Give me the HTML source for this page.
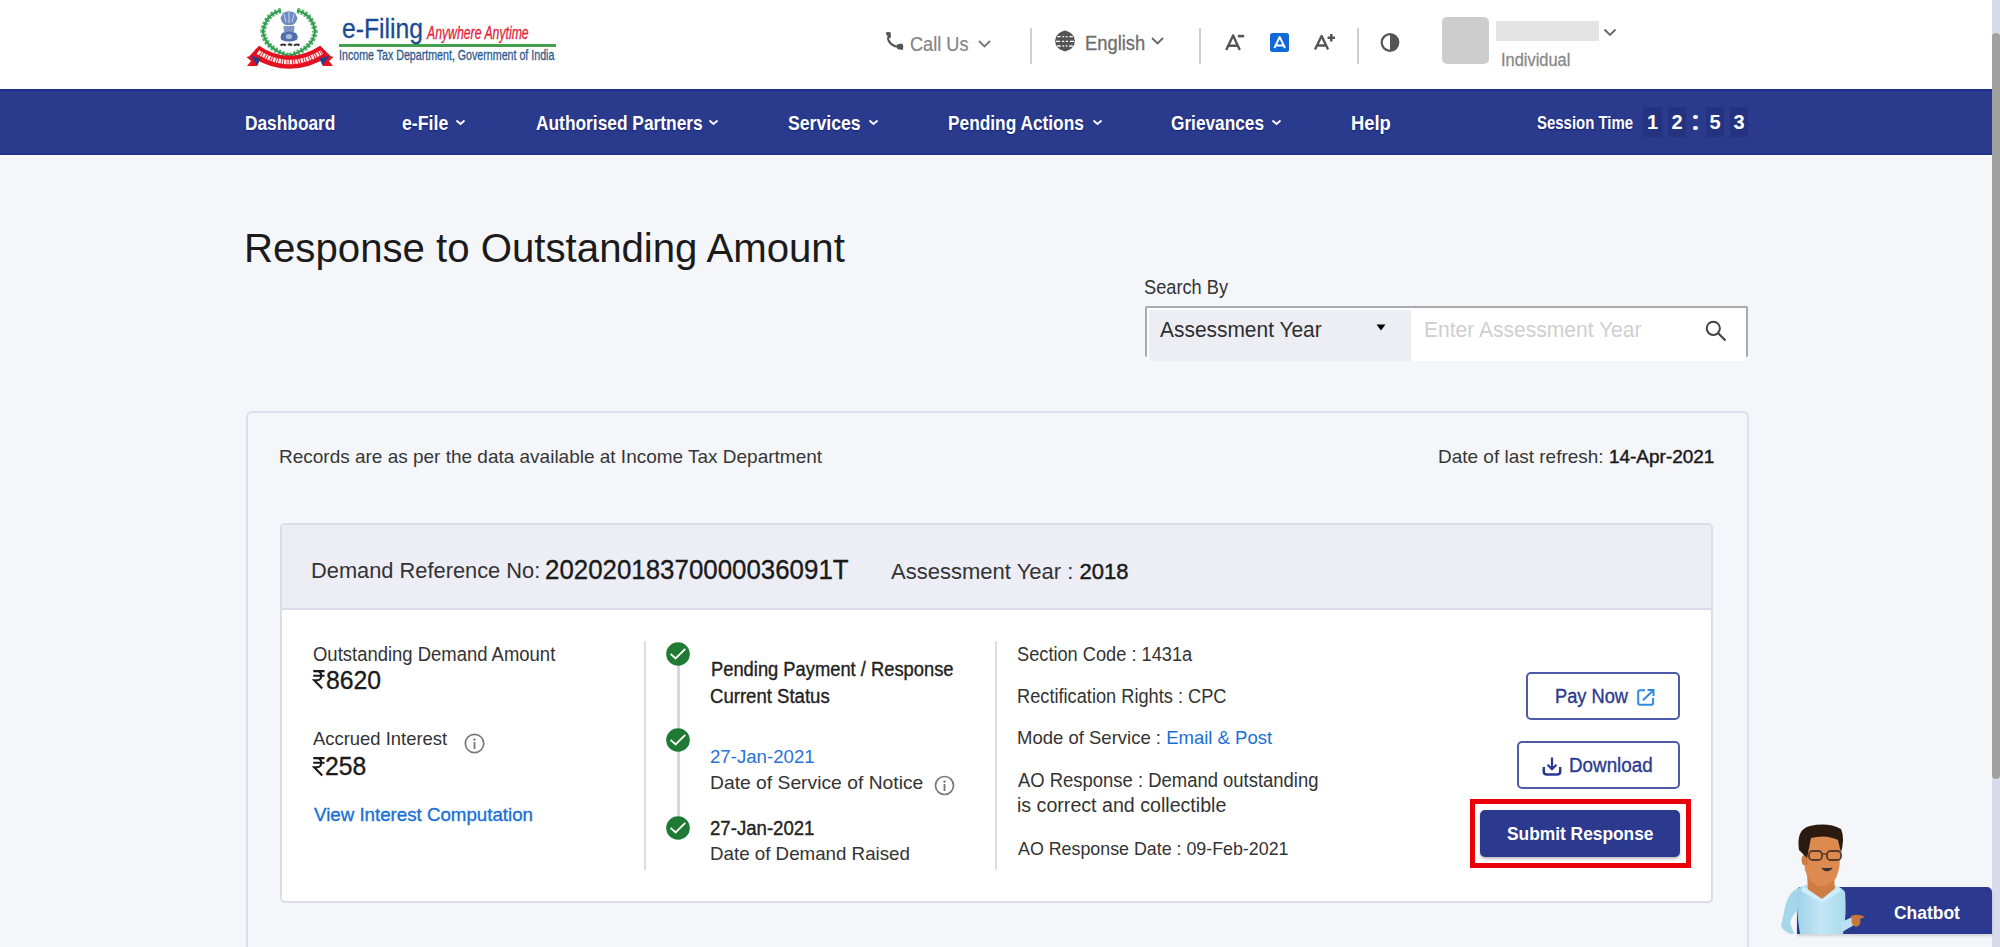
<!DOCTYPE html>
<html><head><meta charset="utf-8">
<title>Response to Outstanding Amount</title>
<style>
*{box-sizing:border-box;margin:0;padding:0}
html,body{width:2000px;height:947px;overflow:hidden;background:#f5f6fa;font-family:"Liberation Sans",sans-serif;position:relative}
.t{position:absolute;white-space:nowrap;transform-origin:0 0}
.b{position:absolute}
svg{position:absolute;overflow:visible}
</style></head>
<body>
<!-- header -->
<div class="b" style="left:0;top:0;width:1992px;height:89px;background:#fff"></div>
<div class="b" style="left:0;top:89px;width:1992px;height:66px;border-top:2px solid #1f2e86;border-bottom:2px solid #23318a;background:#2a3a8c"></div>
<div class="b" style="left:0;top:155px;width:1992px;height:2px;background:#fbfbfd"></div>
<!-- scrollbar -->
<div class="b" style="left:1992px;top:0;width:8px;height:947px;background:#d7dae8"></div>
<div class="b" style="left:1992px;top:33px;width:8px;height:746px;background:#a0a0a0;border-radius:4px"></div>

<!-- logo emblem -->
<svg style="left:240px;top:0" width="100" height="80" viewBox="240 0 100 80">
  <path d="M281 10.5 Q266 14 263 31 Q264 48 289 56 Q314 48 315 31 Q312 14 297 10.5" fill="none" stroke="#5fb474" stroke-width="5.5" stroke-dasharray="2.6 1.4"/>
  <path d="M281 10.5 Q266 14 263 31 Q264 48 289 56 Q314 48 315 31 Q312 14 297 10.5" fill="none" stroke="#2e9a4c" stroke-width="2"/>
  <path d="M283 13 Q289 9.5 295 13 L297.5 18 Q296 24 292 25 L286 25 Q282 24 280.5 18 Z" fill="#6f8cc0"/>
  <path d="M284 14 L286 22 M289 12 V23 M294 14 L292 22" stroke="#c9d5ea" stroke-width="1"/>
  <path d="M283.5 26 H294.5 L294 32 H284 Z" fill="#7e97c6"/>
  <path d="M282 33 Q289 30 296 33 Q299 37 296.5 40 Q289 43 281.5 40 Q279.5 37 282 33 Z" fill="#4f6eaa"/>
  <ellipse cx="289" cy="36.5" rx="3.2" ry="2.6" fill="#a9bbdc"/>
  <path d="M280.5 45.5 Q283 43.5 286 45.5 M288 45 Q290 43.5 292 45.5 M294 45.5 Q297 43.5 299.5 45.5" fill="none" stroke="#333" stroke-width="2"/>
  <path d="M259 45.7 Q289 65.7 320.2 45.7 L330.2 55.7 Q289 81.7 249.7 55.7 Z" fill="#e40f1f"/>
  <path d="M250 56 L260.5 57 L257 66 L247 66 L251 61 L246.5 57 Z" fill="#e40f1f"/>
  <path d="M330 56 L319.5 57 L323 66 L333 66 L329 61 L333.5 57 Z" fill="#e40f1f"/>
  <path d="M250.5 55.7 L260.5 58.5 L257.5 65.5 Z" fill="#23418f"/>
  <path d="M329.5 55.7 L319.5 58.5 L322.5 65.5 Z" fill="#23418f"/>
  <path d="M258 52 Q289 72 322 52" fill="none" stroke="#fff" stroke-width="4.5" stroke-dasharray="2.5 0.8 1.5 0.8" opacity="0.9"/>
</svg>
<div class="b" style="left:339px;top:44px;width:217px;height:3px;background:#43a04f"></div>

<!-- call us -->
<svg style="left:884px;top:31px" width="20" height="20" viewBox="0 0 20 20"><path fill="#555" d="M1.6 1.4 Q4 0.6 6.6 1.3 L7 6.3 Q5.6 7.4 4.3 7.6 Z M12.9 13.6 L17.6 12.6 Q19.2 13.4 19.3 15 L19 18.7 Q15.5 19.3 13 17.6 Z"/><path d="M3.6 6.5 Q5 14.3 14.2 16" fill="none" stroke="#555" stroke-width="2"/></svg>
<svg style="left:978px;top:40px" width="13" height="8" viewBox="0 0 13 8"><path d="M1 1 L6.5 6.5 L12 1" fill="none" stroke="#777" stroke-width="1.8"/></svg>
<div class="b" style="left:1030px;top:28px;width:2px;height:36px;background:#cfcfcf"></div>
<!-- globe -->
<svg style="left:1055px;top:31px" width="20" height="20" viewBox="0 0 20 20">
  <circle cx="10" cy="10" r="9.9" fill="#555"/>
  <path d="M2.2 5.6 H17.8 M1 10.3 H19 M2.2 15 H17.8" stroke="#fff" stroke-width="1.3"/>
  <ellipse cx="10" cy="10" rx="4" ry="9.5" fill="none" stroke="#555" stroke-width="1.8"/>
  <path d="M10 0.5 V19.5" stroke="#555" stroke-width="1.6"/>
</svg>
<svg style="left:1151px;top:37px" width="13" height="8" viewBox="0 0 13 8"><path d="M1 1 L6.5 6.5 L12 1" fill="none" stroke="#666" stroke-width="1.8"/></svg>
<div class="b" style="left:1199px;top:28px;width:2px;height:36px;background:#cfcfcf"></div>
<!-- A- A A+ -->
<svg style="left:1224px;top:33px" width="24" height="20" viewBox="0 0 24 20"><path d="M2.2 17 L9.1 2.4 L15.8 17 M4.3 12.8 H13.9" fill="none" stroke="#555" stroke-width="2.4" stroke-linejoin="round"/><path d="M13.8 3.1 H20.2" stroke="#555" stroke-width="2.6"/></svg>
<div class="b" style="left:1270px;top:33px;width:19px;height:18.5px;background:#0f69d6;border-radius:2.5px"></div>
<svg style="left:1272px;top:35px" width="15" height="15" viewBox="0 0 15 15"><path d="M2.4 13 L7.7 2 L13 13 M4 10.5 H11.4" fill="none" stroke="#fff" stroke-width="1.9" stroke-linejoin="round"/></svg>
<svg style="left:1313px;top:33px" width="24" height="20" viewBox="0 0 24 20"><path d="M2 16.6 L8.6 3 L15.1 16.6 M4 12.5 H13.1" fill="none" stroke="#555" stroke-width="2.4" stroke-linejoin="round"/><path d="M14.6 4.7 H21.9 M18.25 1 V8.4" stroke="#555" stroke-width="2.5"/></svg>
<div class="b" style="left:1357px;top:28px;width:2px;height:36px;background:#cfcfcf"></div>
<!-- contrast -->
<svg style="left:1380px;top:33px" width="20" height="19" viewBox="0 0 20 19"><circle cx="10" cy="9.5" r="8.3" fill="none" stroke="#555" stroke-width="2.2"/><path d="M10 1.2 A8.3 8.3 0 0 1 10 17.8 Z" fill="#555"/></svg>
<!-- avatar -->
<div class="b" style="left:1442px;top:17px;width:47px;height:47px;background:#cdcdcd;border-radius:5px"></div>
<div class="b" style="left:1496px;top:21px;width:103px;height:20px;background:#e4e4e4"></div>
<svg style="left:1603px;top:28px" width="14" height="9" viewBox="0 0 14 9"><path d="M1.5 1.5 L7 7 L12.5 1.5" fill="none" stroke="#666" stroke-width="1.8"/></svg>

<!-- nav chevrons -->
<svg style="left:455px;top:119px" width="11" height="7" viewBox="0 0 11 7"><path d="M1.5 1.5 L5.5 5 L9.5 1.5" fill="none" stroke="#fff" stroke-width="1.8"/></svg>
<svg style="left:708px;top:119px" width="11" height="7" viewBox="0 0 11 7"><path d="M1.5 1.5 L5.5 5 L9.5 1.5" fill="none" stroke="#fff" stroke-width="1.8"/></svg>
<svg style="left:868px;top:119px" width="11" height="7" viewBox="0 0 11 7"><path d="M1.5 1.5 L5.5 5 L9.5 1.5" fill="none" stroke="#fff" stroke-width="1.8"/></svg>
<svg style="left:1092px;top:119px" width="11" height="7" viewBox="0 0 11 7"><path d="M1.5 1.5 L5.5 5 L9.5 1.5" fill="none" stroke="#fff" stroke-width="1.8"/></svg>
<svg style="left:1271px;top:119px" width="11" height="7" viewBox="0 0 11 7"><path d="M1.5 1.5 L5.5 5 L9.5 1.5" fill="none" stroke="#fff" stroke-width="1.8"/></svg>

<!-- session boxes -->
<div class="b" style="left:1643px;top:107px;width:19px;height:30px;background:#25327f"></div>
<div class="b" style="left:1668px;top:107px;width:18px;height:30px;background:#25327f"></div>
<div class="b" style="left:1706px;top:107px;width:18px;height:30px;background:#25327f"></div>
<div class="b" style="left:1730px;top:107px;width:18px;height:30px;background:#25327f"></div>
<div class="b" style="left:1693px;top:115px;width:5px;height:4px;background:#fff;border-radius:2px"></div>
<div class="b" style="left:1693px;top:126px;width:5px;height:4px;background:#fff;border-radius:2px"></div>
<div class="t" style="left:1643px;top:111px;width:19px;text-align:center;font-weight:bold;font-size:20px;line-height:22px;color:#fff">1</div>
<div class="t" style="left:1668px;top:111px;width:18px;text-align:center;font-weight:bold;font-size:20px;line-height:22px;color:#fff">2</div>
<div class="t" style="left:1706px;top:111px;width:18px;text-align:center;font-weight:bold;font-size:20px;line-height:22px;color:#fff">5</div>
<div class="t" style="left:1730px;top:111px;width:18px;text-align:center;font-weight:bold;font-size:20px;line-height:22px;color:#fff">3</div>

<!-- search box -->
<div class="b" style="left:1147px;top:308px;width:599px;height:53px;background:#fff"></div>
<div class="b" style="left:1145px;top:306px;width:603px;height:2px;background:#a9aaae;border-radius:2px 2px 0 0"></div>
<div class="b" style="left:1145px;top:306px;width:2px;height:51px;background:#a9aaae;border-radius:2px 0 0 2px"></div>
<div class="b" style="left:1746px;top:306px;width:2px;height:51px;background:#a9aaae;border-radius:0 2px 2px 0"></div>
<div class="b" style="left:1148.5px;top:309.5px;width:262px;height:51.5px;background:#ededf4"></div>
<svg style="left:1376px;top:324px" width="10" height="7" viewBox="0 0 10 7"><path d="M0.5 0.5 H9.5 L5 6.5 Z" fill="#000"/></svg>
<svg style="left:1703px;top:318px" width="26" height="26" viewBox="0 0 26 26"><circle cx="10.3" cy="10.3" r="6.6" fill="none" stroke="#444" stroke-width="2"/><path d="M15 15 L22.5 22.5" stroke="#444" stroke-width="2.2"/></svg>

<!-- outer card -->
<div class="b" style="left:246px;top:411px;width:1503px;height:600px;border:2px solid #dcdeec;border-radius:6px;background:#f5f6fa"></div>
<!-- inner card -->
<div class="b" style="left:280px;top:523px;width:1433px;height:380px;border:2px solid #dadcea;border-radius:5px;background:#fff;overflow:hidden">
  <div class="b" style="left:0;top:0;width:1431px;height:85px;background:#ecedf5;border-bottom:2px solid #dadcea"></div>
</div>
<!-- column separators -->
<div class="b" style="left:644px;top:641px;width:2px;height:229px;background:#dcdcec"></div>
<div class="b" style="left:995px;top:641px;width:2px;height:229px;background:#dcdcec"></div>
<!-- timeline -->
<div class="b" style="left:676.5px;top:660px;width:3px;height:160px;background:#d6d5ea"></div>
<svg style="left:666px;top:641.5px" width="24" height="24" viewBox="0 0 24 24"><circle cx="12" cy="12" r="11.8" fill="#1f7a33"/><path d="M4.6 11.9 L9.6 16.5 L19.3 6.8" fill="none" stroke="#fff" stroke-width="1.9"/></svg>
<svg style="left:666px;top:727.5px" width="24" height="24" viewBox="0 0 24 24"><circle cx="12" cy="12" r="11.8" fill="#1f7a33"/><path d="M4.6 11.9 L9.6 16.5 L19.3 6.8" fill="none" stroke="#fff" stroke-width="1.9"/></svg>
<svg style="left:666px;top:815.5px" width="24" height="24" viewBox="0 0 24 24"><circle cx="12" cy="12" r="11.8" fill="#1f7a33"/><path d="M4.6 11.9 L9.6 16.5 L19.3 6.8" fill="none" stroke="#fff" stroke-width="1.9"/></svg>
<!-- info icons -->
<svg style="left:464px;top:732.5px" width="21" height="21" viewBox="0 0 21 21"><circle cx="10.5" cy="10.5" r="9.2" fill="none" stroke="#777" stroke-width="1.7"/><circle cx="10.5" cy="6.6" r="1.2" fill="#777"/><rect x="9.6" y="9" width="1.8" height="7" fill="#777"/></svg>
<svg style="left:934px;top:774.5px" width="21" height="21" viewBox="0 0 21 21"><circle cx="10.5" cy="10.5" r="9" fill="none" stroke="#777" stroke-width="1.7"/><circle cx="10.5" cy="6.6" r="1.2" fill="#777"/><rect x="9.6" y="9" width="1.8" height="7" fill="#777"/></svg>
<!-- rupee values -->
<svg style="left:312.5px;top:670px" width="12" height="19" viewBox="0 0 12 19"><path d="M0.3 1.1 H11.5 M0.3 5.8 H11.5 M0.8 1.1 H4.2 C9.6 1.1 9.6 10.2 4.2 10.2 H1.2 L9.2 18.4" fill="none" stroke="#1a1a1a" stroke-width="2.1"/></svg>
<svg style="left:312.5px;top:756.5px" width="12" height="19" viewBox="0 0 12 19"><path d="M0.3 1.1 H11.5 M0.3 5.8 H11.5 M0.8 1.1 H4.2 C9.6 1.1 9.6 10.2 4.2 10.2 H1.2 L9.2 18.4" fill="none" stroke="#1a1a1a" stroke-width="2.1"/></svg>

<!-- buttons -->
<div class="b" style="left:1526px;top:672px;width:154px;height:48px;border:2px solid #4d5baa;border-radius:5px;background:#fff"></div>
<svg style="left:1636px;top:687.5px" width="20" height="19" viewBox="0 0 20 19"><path d="M9 2.2 H4 Q2.2 2.2 2.2 4 V15 Q2.2 16.8 4 16.8 H15.3 Q17.1 16.8 17.1 15 V10" fill="none" stroke="#2f8ae2" stroke-width="2"/><path d="M11.5 2 H17.5 V8 M17.3 2.2 L7 12.3" fill="none" stroke="#2f8ae2" stroke-width="2"/></svg>
<div class="b" style="left:1517px;top:741px;width:163px;height:48px;border:2px solid #4d5baa;border-radius:5px;background:#fff"></div>
<svg style="left:1541px;top:756px" width="22" height="21" viewBox="0 0 22 21"><path d="M11 1.5 V13 M6.6 8.8 L11 13.2 L15.4 8.8" fill="none" stroke="#2b3a8e" stroke-width="2.2"/><path d="M2.8 11 V15.5 Q2.8 18.6 6 18.6 H16 Q19.2 18.6 19.2 15.5 V11" fill="none" stroke="#2b3a8e" stroke-width="2.5"/></svg>
<div class="b" style="left:1480px;top:810px;width:200px;height:47px;background:#2b3a8e;border-radius:5px;box-shadow:0 2px 3px rgba(0,0,0,.25)"></div>
<div class="b" style="left:1470px;top:799px;width:221px;height:69px;border:5px solid #ea0008"></div>

<!-- chatbot -->
<div class="b" style="left:1797px;top:887px;width:195px;height:47px;background:#2b3a8e;border-radius:4px 5px 0 0;box-shadow:0 2px 3px rgba(0,0,0,.15)"></div>
<svg style="left:1775px;top:820px" width="100" height="120" viewBox="1775 820 100 120">
  <defs><linearGradient id="sh" x1="0" y1="0" x2="1" y2="0"><stop offset="0" stop-color="#9fd2e8"/><stop offset="0.5" stop-color="#c3e6f4"/><stop offset="1" stop-color="#a9d9ec"/></linearGradient></defs>
  <!-- left arm -->
  <path d="M1799 888 Q1789 891 1785 907 L1781 926 Q1784 932 1791 934 L1794 934 L1790 922 Q1794 912 1801 906 Z" fill="#a6d6ea"/>
  <!-- torso -->
  <path d="M1797 889 Q1806 883 1822 884 Q1840 884 1845 892 Q1847 915 1843 934 L1800 934 Q1796 910 1797 889 Z" fill="url(#sh)"/>
  <!-- right arm -->
  <path d="M1840 923 L1852 917 L1856 924 L1842 932 Z" fill="#b9e1f1"/>
  <path d="M1851 916 Q1858 913 1865 917 L1860 919 Q1862 925 1856 927 L1852 924 Z" fill="#c77837"/>
  <!-- neck -->
  <path d="M1807 874 L1834 874 L1835 891 L1822 899 L1808 891 Z" fill="#cf7c42"/>
  <path d="M1803 886 L1822 899 L1838 886 L1841 891 L1822 903 L1801 891 Z" fill="#cdeefb"/>
  <!-- head -->
  <path d="M1803 846 Q1802 828 1820 829 Q1840 830 1840 848 Q1841 868 1836 878 Q1828 888 1819 886 Q1808 882 1805 870 Z" fill="#dc8a50"/>
  <ellipse cx="1805" cy="860" rx="3.5" ry="5.5" fill="#cf7c42"/>
  <path d="M1799 850 Q1796 829 1810 826 Q1828 822 1841 829 Q1845 838 1841 853 L1838 840 Q1826 834 1811 838 L1807 858 Z" fill="#2a1a10"/>
  <rect x="1809" y="851" width="13" height="9" rx="3.5" fill="none" stroke="#5a3a2a" stroke-width="1.8"/>
  <rect x="1827" y="851" width="14" height="9" rx="3.5" fill="none" stroke="#5a3a2a" stroke-width="1.8"/>
  <path d="M1822 854 L1827 854" stroke="#5a3a2a" stroke-width="1.5"/>
  <path d="M1822 868 Q1827 873 1832 868" fill="#333" stroke="#333" stroke-width="1.5"/>
</svg>

<div class="t" style="left:341.6px;top:15.0px;font-size:27.5px;line-height:27.5px;color:#1c4a92;transform:scaleX(0.898);-webkit-text-stroke:0.3px currentColor;">e-Filing</div>
<div class="t" style="left:427.0px;top:24.5px;font-size:17.5px;line-height:17.5px;color:#e3223a;font-style:italic;transform:scaleX(0.700);-webkit-text-stroke:0.3px currentColor;">Anywhere Anytime</div>
<div class="t" style="left:339.2px;top:48.4px;font-size:14.0px;line-height:14.0px;color:#2d5a8e;transform:scaleX(0.761);-webkit-text-stroke:0.3px currentColor;">Income Tax Department, Government of India</div>
<div class="t" style="left:910.4px;top:35.2px;font-size:19.5px;line-height:19.5px;color:#858585;transform:scaleX(0.930);-webkit-text-stroke:0.2px currentColor;">Call Us</div>
<div class="t" style="left:1085.1px;top:33.6px;font-size:19.5px;line-height:19.5px;color:#6e6e6e;transform:scaleX(0.942);-webkit-text-stroke:0.3px currentColor;">English</div>
<div class="t" style="left:1500.6px;top:51.5px;font-size:17.5px;line-height:17.5px;color:#888888;transform:scaleX(0.938);-webkit-text-stroke:0.3px currentColor;">Individual</div>
<div class="t" style="left:244.7px;top:111.7px;font-size:21.0px;line-height:21.0px;color:#ffffff;font-weight:bold;transform:scaleX(0.824);text-shadow:0 1px 1.5px rgba(10,20,110,.7);">Dashboard</div>
<div class="t" style="left:401.7px;top:111.7px;font-size:21.0px;line-height:21.0px;color:#ffffff;font-weight:bold;transform:scaleX(0.843);text-shadow:0 1px 1.5px rgba(10,20,110,.7);">e-File</div>
<div class="t" style="left:536.0px;top:111.7px;font-size:21.0px;line-height:21.0px;color:#ffffff;font-weight:bold;transform:scaleX(0.826);text-shadow:0 1px 1.5px rgba(10,20,110,.7);">Authorised Partners</div>
<div class="t" style="left:788.2px;top:111.7px;font-size:21.0px;line-height:21.0px;color:#ffffff;font-weight:bold;transform:scaleX(0.841);text-shadow:0 1px 1.5px rgba(10,20,110,.7);">Services</div>
<div class="t" style="left:948.2px;top:111.7px;font-size:21.0px;line-height:21.0px;color:#ffffff;font-weight:bold;transform:scaleX(0.824);text-shadow:0 1px 1.5px rgba(10,20,110,.7);">Pending Actions</div>
<div class="t" style="left:1171.2px;top:111.7px;font-size:21.0px;line-height:21.0px;color:#ffffff;font-weight:bold;transform:scaleX(0.821);text-shadow:0 1px 1.5px rgba(10,20,110,.7);">Grievances</div>
<div class="t" style="left:1351.1px;top:111.7px;font-size:21.0px;line-height:21.0px;color:#ffffff;font-weight:bold;transform:scaleX(0.873);text-shadow:0 1px 1.5px rgba(10,20,110,.7);">Help</div>
<div class="t" style="left:1536.8px;top:114.4px;font-size:18.5px;line-height:18.5px;color:#ffffff;font-weight:bold;transform:scaleX(0.808);text-shadow:0 1px 1.5px rgba(10,20,110,.7);">Session Time</div>
<div class="t" style="left:244.1px;top:228.2px;font-size:41.0px;line-height:41.0px;color:#1b1b1b;transform:scaleX(0.980);">Response to Outstanding Amount</div>
<div class="t" style="left:1144.4px;top:276.5px;font-size:20.5px;line-height:20.5px;color:#333333;transform:scaleX(0.889);">Search By</div>
<div class="t" style="left:1160.3px;top:319.0px;font-size:22.0px;line-height:22.0px;color:#2e2e2e;transform:scaleX(0.951);">Assessment Year</div>
<div class="t" style="left:1423.8px;top:319.4px;font-size:22.5px;line-height:22.5px;color:#cfcfcf;transform:scaleX(0.935);">Enter Assessment Year</div>
<div class="t" style="left:278.8px;top:447.6px;font-size:18.5px;line-height:18.5px;color:#363636;transform:scaleX(1.026);">Records are as per the data available at Income Tax Department</div>
<div class="t" style="left:1437.5px;top:447.6px;font-size:18.5px;line-height:18.5px;color:#363636;transform:scaleX(1.026);">Date of last refresh: <span style="color:#1a1a1a;-webkit-text-stroke:0.45px #1a1a1a">14-Apr-2021</span></div>
<div class="t" style="left:311.1px;top:559.6px;font-size:22.5px;line-height:22.5px;color:#333333;transform:scaleX(0.970);">Demand Reference No:</div>
<div class="t" style="left:545.1px;top:555.6px;font-size:28.0px;line-height:28.0px;color:#1a1a1a;transform:scaleX(0.924);-webkit-text-stroke:0.35px currentColor;">20202018370000036091T</div>
<div class="t" style="left:891.4px;top:561.4px;font-size:22.5px;line-height:22.5px;color:#333333;transform:scaleX(0.979);">Assessment Year : <span style="color:#1a1a1a;-webkit-text-stroke:0.45px #1a1a1a">2018</span></div>
<div class="t" style="left:312.6px;top:644.8px;font-size:19.5px;line-height:19.5px;color:#333333;transform:scaleX(0.947);">Outstanding Demand Amount</div>
<div class="t" style="left:313.0px;top:729.4px;font-size:19.0px;line-height:19.0px;color:#333333;transform:scaleX(0.970);">Accrued Interest</div>
<div class="t" style="left:313.6px;top:805.4px;font-size:19.0px;line-height:19.0px;color:#1a6fd6;transform:scaleX(0.984);-webkit-text-stroke:0.35px currentColor;">View Interest Computation</div>
<div class="t" style="left:710.5px;top:660.3px;font-size:19.5px;line-height:19.5px;color:#222222;transform:scaleX(0.940);-webkit-text-stroke:0.35px currentColor;">Pending Payment / Response</div>
<div class="t" style="left:710.4px;top:686.6px;font-size:19.5px;line-height:19.5px;color:#222222;transform:scaleX(0.952);-webkit-text-stroke:0.35px currentColor;">Current Status</div>
<div class="t" style="left:710.2px;top:747.2px;font-size:19.0px;line-height:19.0px;color:#2a72d6;transform:scaleX(0.981);">27-Jan-2021</div>
<div class="t" style="left:710.1px;top:773.3px;font-size:19.0px;line-height:19.0px;color:#333333;transform:scaleX(1.015);">Date of Service of Notice</div>
<div class="t" style="left:710.2px;top:818.9px;font-size:19.5px;line-height:19.5px;color:#222222;transform:scaleX(0.954);-webkit-text-stroke:0.35px currentColor;">27-Jan-2021</div>
<div class="t" style="left:710.2px;top:844.4px;font-size:19.0px;line-height:19.0px;color:#333333;transform:scaleX(0.986);">Date of Demand Raised</div>
<div class="t" style="left:1017.1px;top:644.6px;font-size:19.5px;line-height:19.5px;color:#333333;transform:scaleX(0.934);">Section Code : 1431a</div>
<div class="t" style="left:1017.1px;top:687.1px;font-size:19.5px;line-height:19.5px;color:#333333;transform:scaleX(0.934);">Rectification Rights : CPC</div>
<div class="t" style="left:1017.0px;top:728.0px;font-size:19.0px;line-height:19.0px;color:#333333;transform:scaleX(0.974);">Mode of Service : <span style="color:#1a6fd6">Email &amp; Post</span></div>
<div class="t" style="left:1018.0px;top:770.8px;font-size:19.5px;line-height:19.5px;color:#333333;transform:scaleX(0.946);">AO Response : Demand outstanding</div>
<div class="t" style="left:1017.0px;top:795.9px;font-size:19.5px;line-height:19.5px;color:#333333;transform:scaleX(1.006);">is correct and collectible</div>
<div class="t" style="left:1018.0px;top:839.4px;font-size:19.0px;line-height:19.0px;color:#333333;transform:scaleX(0.938);">AO Response Date : 09-Feb-2021</div>
<div class="t" style="left:1554.8px;top:687.0px;font-size:19.5px;line-height:19.5px;color:#2b3a8e;transform:scaleX(0.936);-webkit-text-stroke:0.35px currentColor;">Pay Now</div>
<div class="t" style="left:1568.7px;top:756.0px;font-size:19.5px;line-height:19.5px;color:#2b3a8e;transform:scaleX(0.965);-webkit-text-stroke:0.35px currentColor;">Download</div>
<div class="t" style="left:1506.7px;top:824.2px;font-size:19.0px;line-height:19.0px;color:#ffffff;font-weight:bold;transform:scaleX(0.913);">Submit Response</div>
<div class="t" style="left:1894.4px;top:902.8px;font-size:19.0px;line-height:19.0px;color:#ffffff;font-weight:bold;transform:scaleX(0.918);">Chatbot</div>
<div class="t" style="left:325.5px;top:666.6px;font-size:26.5px;line-height:26.5px;color:#1a1a1a;transform:scaleX(0.935);-webkit-text-stroke:0.35px currentColor;">8620</div>
<div class="t" style="left:325.0px;top:753.6px;font-size:25.5px;line-height:25.5px;color:#1a1a1a;transform:scaleX(0.967);-webkit-text-stroke:0.35px currentColor;">258</div>
</body></html>
